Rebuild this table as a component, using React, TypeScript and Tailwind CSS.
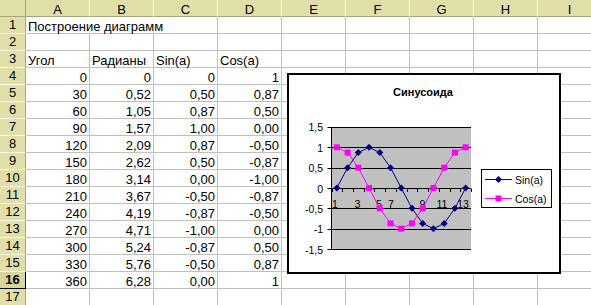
import React from 'react';

const cols = ['A', 'B', 'C', 'D', 'E', 'F', 'G', 'H', 'I'];

const data: string[][] = [
  ['0', '0', '0', '1'],
  ['30', '0,52', '0,50', '0,87'],
  ['60', '1,05', '0,87', '0,50'],
  ['90', '1,57', '1,00', '0,00'],
  ['120', '2,09', '0,87', '-0,50'],
  ['150', '2,62', '0,50', '-0,87'],
  ['180', '3,14', '0,00', '-1,00'],
  ['210', '3,67', '-0,50', '-0,87'],
  ['240', '4,19', '-0,87', '-0,50'],
  ['270', '4,71', '-1,00', '0,00'],
  ['300', '5,24', '-0,87', '0,50'],
  ['330', '5,76', '-0,50', '0,87'],
  ['360', '6,28', '0,00', '1'],
];

const sinVals = [0, 0.5, 0.87, 1, 0.87, 0.5, 0, -0.5, -0.87, -1, -0.87, -0.5, 0];
const cosVals = [1, 0.87, 0.5, 0, -0.5, -0.87, -1, -0.87, -0.5, 0, 0.5, 0.87, 1];

function RowHead({ n, active }: { n: number; active?: boolean }) {
  return (
    <div
      className={
        'w-[26px] shrink-0 flex items-center justify-center leading-[12px] border-b border-r ' +
        (active
          ? 'bg-[#d8d49a] font-bold border-b-black border-r-black'
          : 'bg-[#e1dfa9] border-b-[#f7f6e4] border-r-[#a8a67a]')
      }
    >
      {n}
    </div>
  );
}

function Cell({ text, left, w = 'w-[64px]' }: { text?: string; left?: boolean; w?: string }) {
  return (
    <div
      className={
        w +
        ' shrink-0 flex items-end leading-[12px] whitespace-nowrap border-r border-b border-[#c0c0c0] ' +
        (left ? 'justify-start pl-[2px]' : 'justify-end pr-[2px]')
      }
    >
      {text}
    </div>
  );
}

function Chart() {
  const X0 = 331.5;
  const X1 = 471;
  const CW = (X1 - X0) / 13;
  const Y0 = 188;
  const YS = 40.67;
  const px = (i: number) => X0 + (i + 0.5) * CW;
  const py = (v: number) => Y0 - v * YS;
  const grid = [1.5, 1, 0.5, 0, -0.5, -1, -1.5];
  const yLabels = ['1,5', '1', '0,5', '0', '-0,5', '-1', '-1,5'];
  const xLabels: [string, number][] = [
    ['1', 335],
    ['3', 357.5],
    ['5', 379],
    ['7', 391],
    ['9', 422.5],
    ['11', 442],
    ['13', 463],
  ];
  const font = 'Liberation Sans, Arial, sans-serif';

  return (
    <div className="absolute left-[287px] top-[73px] w-[274px] h-[201px] border-2 border-black bg-white">
      <svg width={270} height={197} viewBox="289 75 270 197" fontFamily={font}>
        <text x={423} y={95.7} fontSize={11} fontWeight="bold" textAnchor="middle">
          Синусоида
        </text>

        <rect x={X0} y={127} width={X1 - X0} height={122} fill="#c0c0c0" />
        {grid.map((v) => (
          <line
            key={v}
            x1={327.5}
            x2={X1}
            y1={Math.round(py(v)) + 0.5}
            y2={Math.round(py(v)) + 0.5}
            stroke="#000"
            strokeWidth={1}
          />
        ))}
        <line x1={X0} x2={X0} y1={127} y2={249.5} stroke="#000" />
        {Array.from({ length: 14 }, (_, k) => (
          <line
            key={k}
            x1={Math.round(X0 + k * CW) + 0.5}
            x2={Math.round(X0 + k * CW) + 0.5}
            y1={188.5}
            y2={192}
            stroke="#000"
          />
        ))}

        {grid.map((v, i) => (
          <text key={v} x={323} y={py(v) + 4.5} fontSize={10.5} textAnchor="end">
            {yLabels[i]}
          </text>
        ))}
        {xLabels.map(([t, x]) => (
          <text key={t} x={x} y={207.5} fontSize={10.5} textAnchor="middle">
            {t}
          </text>
        ))}

        <polyline
          points={sinVals.map((v, i) => `${px(i)},${py(v)}`).join(' ')}
          fill="none"
          stroke="#000080"
          strokeWidth={1}
        />
        {sinVals.map((v, i) => {
          const x = px(i);
          const y = py(v);
          return (
            <polygon
              key={i}
              points={`${x},${y - 3.5} ${x + 3.5},${y} ${x},${y + 3.5} ${x - 3.5},${y}`}
              fill="#000080"
            />
          );
        })}

        <polyline
          points={cosVals.map((v, i) => `${px(i)},${py(v)}`).join(' ')}
          fill="none"
          stroke="#ff00ff"
          strokeWidth={1}
        />
        {cosVals.map((v, i) => (
          <rect key={i} x={px(i) - 3} y={py(v) - 3} width={6} height={6} fill="#ff00ff" />
        ))}

        <rect x={481.5} y={169.5} width={70} height={38} fill="#fff" stroke="#000" />
        <line x1={485} x2={512} y1={179.5} y2={179.5} stroke="#000080" />
        <polygon points="498.5,176 502,179.5 498.5,183 495,179.5" fill="#000080" />
        <text x={515} y={183.5} fontSize={10.5}>
          Sin(a)
        </text>
        <line x1={485} x2={512} y1={198.5} y2={198.5} stroke="#ff00ff" />
        <rect x={495.5} y={195.5} width={6} height={6} fill="#ff00ff" />
        <text x={515} y={202.5} fontSize={10.5}>
          Cos(a)
        </text>
      </svg>
    </div>
  );
}

export default function App() {
  return (
    <div className="relative w-[591px] h-[305px] overflow-hidden bg-white text-black text-[13px] font-['Liberation_Sans',Arial,sans-serif]">
      {/* column headers */}
      <div className="flex h-[17px]">
        <div className="w-[26px] shrink-0 bg-[#e1dfa9] border-r border-b border-[#a8a67a]" />
        {cols.map((c) => (
          <div
            key={c}
            className="w-[64px] shrink-0 flex items-end justify-center leading-[12px] bg-[#e1dfa9] border-r border-r-[#f7f6e4] border-b border-b-[#a8a67a]"
          >
            {c}
          </div>
        ))}
      </div>

      {/* row 1 */}
      <div className="flex h-[17px]">
        <RowHead n={1} />
        <Cell text="Построение диаграмм" left w="w-[192px]" />
        {cols.slice(3).map((c) => (
          <Cell key={c} />
        ))}
      </div>

      {/* row 2 */}
      <div className="flex h-[17px]">
        <RowHead n={2} />
        {cols.map((c) => (
          <Cell key={c} />
        ))}
      </div>

      {/* row 3 */}
      <div className="flex h-[17px]">
        <RowHead n={3} />
        {['Угол', 'Радианы', 'Sin(a)', 'Cos(a)'].map((t) => (
          <Cell key={t} text={t} left />
        ))}
        {cols.slice(4).map((c) => (
          <Cell key={c} />
        ))}
      </div>

      {data.map((r, i) => (
        <div key={i} className="flex h-[17px]">
          <RowHead n={i + 4} active={i + 4 === 16} />
          {r.map((t, j) => (
            <Cell key={j} text={t} />
          ))}
          {cols.slice(4).map((c) => (
            <Cell key={c} />
          ))}
        </div>
      ))}

      {/* row 17 */}
      <div className="flex h-[17px]">
        <RowHead n={17} />
        {cols.map((c) => (
          <Cell key={c} />
        ))}
      </div>

      <Chart />
    </div>
  );
}
